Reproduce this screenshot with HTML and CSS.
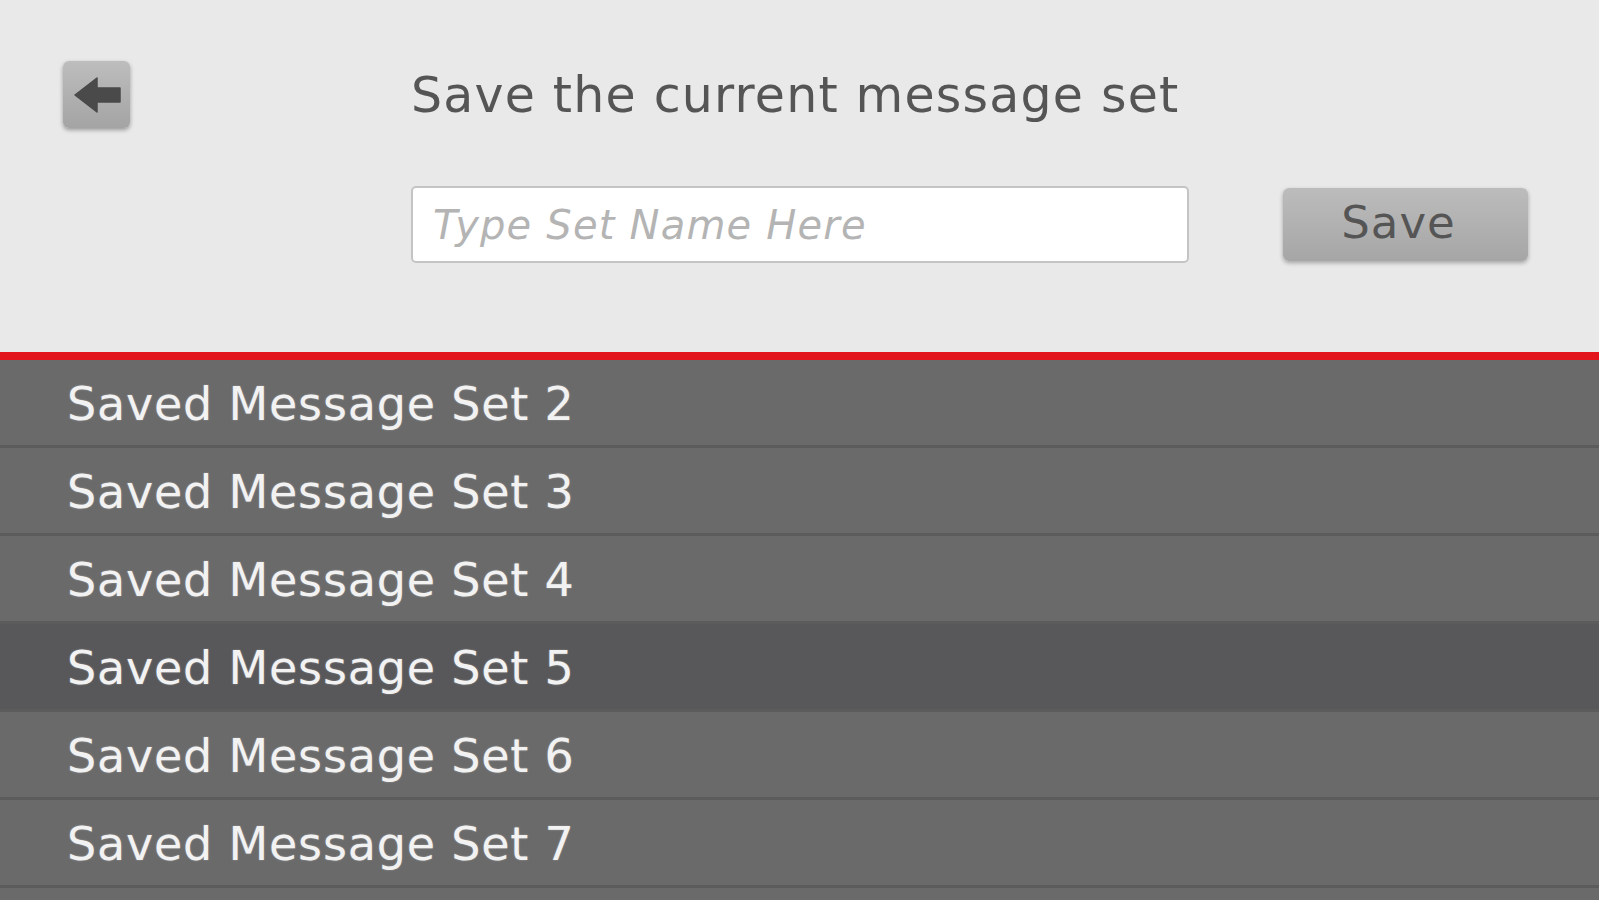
FILE: index.html
```html
<!DOCTYPE html>
<html>
<head>
<meta charset="utf-8">
<link rel="stylesheet" href="styles.css">
</head>
<body>
<div class="header">
  <button class="back" aria-label="Back">
    <svg width="67" height="67" viewBox="0 0 67 67"><path d="M12 34 L34 17 L34 27 L57 27 L57 41 L34 41 L34 51 Z" fill="#4a4a4a" stroke="#4a4a4a" stroke-width="1.5" stroke-linejoin="round"/></svg>
  </button>
  <div class="center">
    <h1 class="title">Save the current message set</h1>
    <input class="name" type="text" placeholder="Type Set Name Here">
  </div>
  <button class="save">Save</button>
</div>
<ul class="list">
  <li class="row">Saved Message Set 2</li>
  <li class="row">Saved Message Set 3</li>
  <li class="row">Saved Message Set 4</li>
  <li class="row selected">Saved Message Set 5</li>
  <li class="row">Saved Message Set 6</li>
  <li class="row">Saved Message Set 7</li>
</ul>
</body>
</html>
```
FILE: styles.css
```css
html, body {
  margin: 0;
  padding: 0;
  height: 900px;
  overflow: hidden;
  background: #6a6a6a;
  font-family: "DejaVu Sans", sans-serif;
}
.header {
  box-sizing: border-box;
  background: #e9e9e9;
  border-bottom: 8px solid #e2141c;
  height: 360px;
  padding: 61px 0 0 63px;
  display: flex;
  align-items: flex-start;
}
.back {
  width: 67px;
  height: 67px;
  padding: 0;
  border: none;
  border-radius: 6px;
  background: linear-gradient(#bdbdbd, #a4a4a4);
  box-shadow: 0 2px 4px rgba(0,0,0,0.35);
  display: block;
}
.back svg { display: block; }
.center {
  margin-left: 281px;
  width: 778px;
  display: flex;
  flex-direction: column;
}
.title {
  margin: 0;
  height: 125px;
  box-sizing: border-box;
  padding-top: 4px;
  font-weight: normal;
  font-size: 49px;
  letter-spacing: 1.2px;
  color: #555555;
  line-height: 62px;
  white-space: nowrap;
}
.name {
  width: 778px;
  height: 77px;
  box-sizing: border-box;
  border: 2px solid #c4c4c4;
  border-radius: 5px;
  background: #ffffff;
  padding: 0 20px;
  font-family: "DejaVu Sans", sans-serif;
  font-size: 40px;
  letter-spacing: 1.2px;
  font-style: italic;
  color: #444;
  outline: none;
}
.name::placeholder { color: #b4b4b4; }
.save {
  margin-left: 94px;
  margin-top: 127px;
  width: 245px;
  height: 73px;
  border: none;
  border-radius: 6px;
  background: linear-gradient(#bcbcbc, #a6a6a6);
  box-shadow: 0 2px 4px rgba(0,0,0,0.3);
  font-family: "DejaVu Sans", sans-serif;
  font-size: 45px;
  letter-spacing: 1px;
  color: #555555;
  padding: 0 14px 4px 0;
}
.list {
  list-style: none;
  margin: 0;
  padding: 0;
}
.row {
  height: 88px;
  box-sizing: border-box;
  border-bottom: 3px solid #5c5c5c;
  background: #6a6a6a;
  color: #f2f2f2;
  font-size: 46px;
  letter-spacing: 0.8px;
  line-height: 88px;
  padding-left: 67px;
  text-shadow: 0 0 2px rgba(255,255,255,0.35);
  white-space: nowrap;
}
.row.selected { background: #58585a; }
```
